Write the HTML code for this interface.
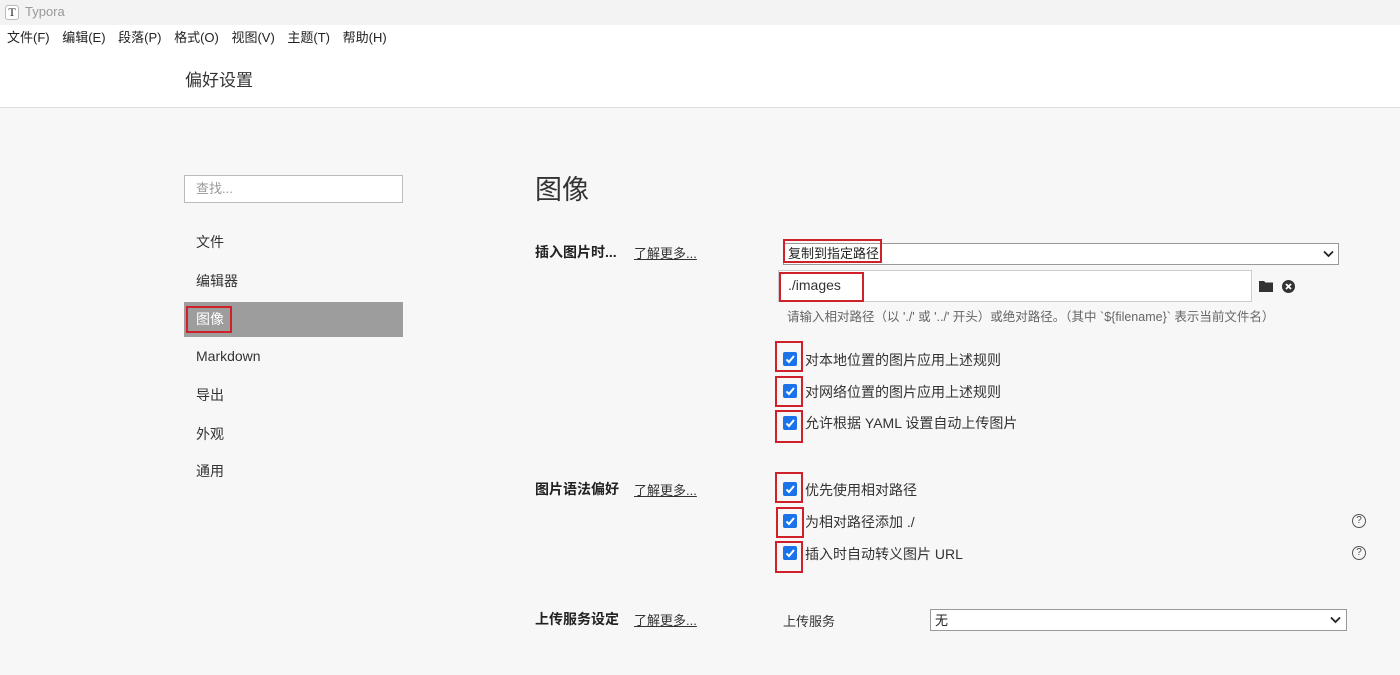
<!DOCTYPE html>
<html><head><meta charset="utf-8"><style>
*{margin:0;padding:0;box-sizing:border-box}
body{width:1400px;height:675px;overflow:hidden;background:#f7f7f7;font-family:"Liberation Sans","Noto Sans CJK SC",sans-serif;color:#333;position:relative;font-size:14px}
.a{position:absolute;white-space:nowrap}
.red{position:absolute;border:2px solid #d0202a}
.cb{position:absolute;width:14px;height:14px;background:#1a73e8;border-radius:2px}
.cb svg{position:absolute;left:1px;top:1px}
.lnk{text-decoration:underline;color:#333;font-size:13px}
.b{font-weight:bold;font-size:14px;color:#222}
</style></head><body>
<div class="a" style="left:0;top:0;width:1400px;height:25px;background:#f3f3f3"></div>
<div class="a" style="left:5px;top:5px;width:14px;height:15px;border:1px solid #bbb;border-radius:3px;background:#fff;font-family:'Liberation Serif',serif;font-size:12px;text-align:center;line-height:13px;color:#222">T</div>
<div class="a" style="left:25px;top:4px;color:#999;font-size:13px">Typora</div>
<div class="a" style="left:0;top:25px;width:1400px;height:83px;background:#fff;border-bottom:1px solid #ddd"></div>
<div class="a" style="left:7px;top:27px;font-size:13px;color:#222;word-spacing:9px">文件(F) 编辑(E) 段落(P) 格式(O) 视图(V) 主题(T) 帮助(H)</div>
<div class="a" style="left:185px;top:66px;font-size:17px;color:#333">偏好设置</div>

<div class="a" style="left:184px;top:175px;width:219px;height:28px;border:1px solid #bbb;background:#fff"></div>
<div class="a" style="left:196px;top:178px;color:#999;font-size:13px">查找...</div>
<div class="a" style="left:196px;top:232px">文件</div>
<div class="a" style="left:196px;top:271px">编辑器</div>
<div class="a" style="left:184px;top:302px;width:219px;height:35px;background:#9d9d9d"></div>
<div class="a" style="left:196px;top:309px;color:#fff">图像</div>
<div class="red" style="left:186px;top:306px;width:46px;height:27px"></div>
<div class="a" style="left:196px;top:348px">Markdown</div>
<div class="a" style="left:196px;top:385px">导出</div>
<div class="a" style="left:196px;top:424px">外观</div>
<div class="a" style="left:196px;top:461px">通用</div>

<div class="a" style="left:535px;top:168px;font-size:27px;color:#333">图像</div>

<div class="a b" style="left:535px;top:242px">插入图片时...</div>
<div class="a lnk" style="left:634px;top:243px">了解更多...</div>
<div class="a" style="left:783px;top:243px;width:556px;height:22px;border:1px solid #999;background:#fff"></div>
<div class="a" style="left:788px;top:243px;font-size:13px;color:#222">复制到指定路径</div>
<svg class="a" style="left:1323px;top:250px" width="11" height="8" viewBox="0 0 11 8"><path d="M1 1.5l4.5 4.5 4.5-4.5" stroke="#222" stroke-width="1.8" fill="none"/></svg>
<div class="red" style="left:783px;top:239px;width:99px;height:24px"></div>
<div class="a" style="left:778px;top:270px;width:474px;height:32px;border:1px solid #ccc;background:#fff"></div>
<div class="a" style="left:788px;top:277px;font-size:14px;color:#333">./images</div>
<div class="red" style="left:779px;top:272px;width:85px;height:30px"></div>
<svg class="a" style="left:1259px;top:280px" width="15" height="12" viewBox="0 0 15 12"><path d="M0 1h5l1.5 1.5H14V12H0z" fill="#333"/></svg>
<svg class="a" style="left:1282px;top:280px" width="13" height="13" viewBox="0 0 13 13"><circle cx="6.5" cy="6.5" r="6.5" fill="#333"/><path d="M4 4l5 5M9 4l-5 5" stroke="#fff" stroke-width="1.8"/></svg>
<div class="a" style="left:787px;top:306px;font-size:12.5px;color:#666">请输入相对路径（以 './' 或 '../' 开头）或绝对路径。（其中 `${filename}` 表示当前文件名）</div>

<div class="cb" style="left:783px;top:352px"><svg width="12" height="12"><path d="M2.5 6.5l2.5 2.5 5-6" stroke="#fff" stroke-width="2" fill="none"/></svg></div>
<div class="a" style="left:805px;top:350px">对本地位置的图片应用上述规则</div>
<div class="red" style="left:775px;top:341px;width:28px;height:31px"></div>
<div class="cb" style="left:783px;top:384px"><svg width="12" height="12"><path d="M2.5 6.5l2.5 2.5 5-6" stroke="#fff" stroke-width="2" fill="none"/></svg></div>
<div class="a" style="left:805px;top:382px">对网络位置的图片应用上述规则</div>
<div class="red" style="left:775px;top:376px;width:28px;height:31px"></div>
<div class="cb" style="left:783px;top:416px"><svg width="12" height="12"><path d="M2.5 6.5l2.5 2.5 5-6" stroke="#fff" stroke-width="2" fill="none"/></svg></div>
<div class="a" style="left:805px;top:413px">允许根据 YAML 设置自动上传图片</div>
<div class="red" style="left:775px;top:410px;width:28px;height:33px"></div>

<div class="a b" style="left:535px;top:479px">图片语法偏好</div>
<div class="a lnk" style="left:634px;top:480px">了解更多...</div>
<div class="cb" style="left:783px;top:482px"><svg width="12" height="12"><path d="M2.5 6.5l2.5 2.5 5-6" stroke="#fff" stroke-width="2" fill="none"/></svg></div>
<div class="a" style="left:805px;top:480px">优先使用相对路径</div>
<div class="red" style="left:775px;top:472px;width:28px;height:31px"></div>
<div class="cb" style="left:783px;top:514px"><svg width="12" height="12"><path d="M2.5 6.5l2.5 2.5 5-6" stroke="#fff" stroke-width="2" fill="none"/></svg></div>
<div class="a" style="left:805px;top:512px">为相对路径添加 ./</div>
<div class="red" style="left:776px;top:507px;width:28px;height:31px"></div>
<div class="cb" style="left:783px;top:546px"><svg width="12" height="12"><path d="M2.5 6.5l2.5 2.5 5-6" stroke="#fff" stroke-width="2" fill="none"/></svg></div>
<div class="a" style="left:805px;top:544px">插入时自动转义图片 URL</div>
<div class="red" style="left:775px;top:541px;width:28px;height:32px"></div>
<div class="a" style="left:1352px;top:514px;width:14px;height:14px;border:1px solid #555;border-radius:50%;font-size:10px;text-align:center;line-height:12px;color:#444">?</div>
<div class="a" style="left:1352px;top:546px;width:14px;height:14px;border:1px solid #555;border-radius:50%;font-size:10px;text-align:center;line-height:12px;color:#444">?</div>

<div class="a b" style="left:535px;top:609px">上传服务设定</div>
<div class="a lnk" style="left:634px;top:610px">了解更多...</div>
<div class="a" style="left:783px;top:611px;font-size:13px">上传服务</div>
<div class="a" style="left:930px;top:609px;width:417px;height:22px;border:1px solid #999;background:#fff"></div>
<div class="a" style="left:935px;top:610px;font-size:13px;color:#222">无</div>
<svg class="a" style="left:1330px;top:616px" width="11" height="8" viewBox="0 0 11 8"><path d="M1 1.5l4.5 4.5 4.5-4.5" stroke="#222" stroke-width="1.8" fill="none"/></svg>
</body></html>
